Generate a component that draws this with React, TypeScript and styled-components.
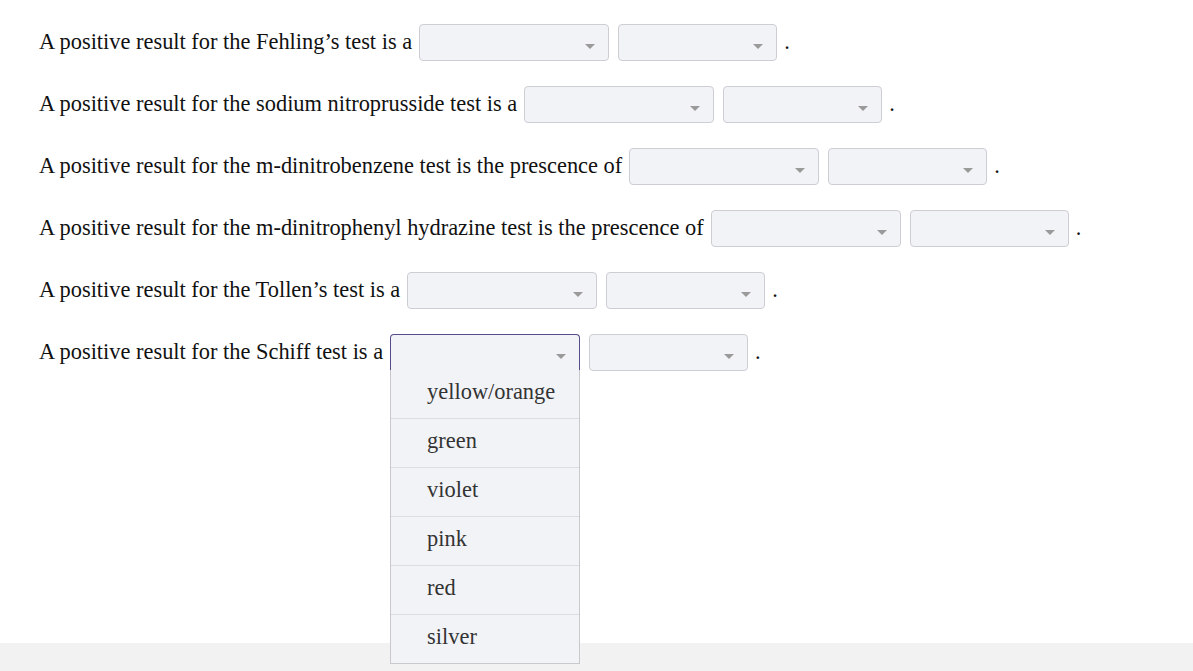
import React from "react";
import styled, { createGlobalStyle } from "styled-components";

const GlobalStyle = createGlobalStyle`
  html, body {
    margin: 0;
    padding: 0;
    background: #ffffff;
  }
  body {
    font-family: "Liberation Serif", "Times New Roman", serif;
    color: #111;
  }
`;

const Page = styled.div`
  min-height: 100vh;
  display: flex;
  flex-direction: column;
`;

const Main = styled.main`
  flex: 1;
  padding: 11px 0 0 39px;
`;

const Footer = styled.footer`
  height: 28px;
  background: #f2f2f2;
`;

const Row = styled.div`
  display: flex;
  align-items: center;
  height: 62px;
  font-size: 22.4px;
`;

const Prompt = styled.span`
  margin-right: 7px;
  white-space: nowrap;
`;

const SelectBox = styled.div<{ $width: number; $open?: boolean }>`
  position: relative;
  box-sizing: border-box;
  width: ${(p) => p.$width}px;
  height: 37px;
  margin-right: 9px;
  background: #f2f3f7;
  border: 1px solid ${(p) => (p.$open ? "#574b8c" : "#cdced3")};
  border-radius: ${(p) => (p.$open ? "4px 4px 0 0" : "4px")};
  ${(p) => (p.$open ? "border-bottom-color: #f2f3f7;" : "")}
  z-index: ${(p) => (p.$open ? 5 : 1)};
`;

const Caret = styled.span`
  position: absolute;
  right: 13px;
  bottom: 11px;
  width: 0;
  height: 0;
  border-left: 5px solid transparent;
  border-right: 5px solid transparent;
  border-top: 5px solid #9a9a9a;
`;

const Period = styled.span`
  margin-left: -2px;
`;

const Menu = styled.ul`
  position: absolute;
  top: 100%;
  left: -1px;
  right: -1px;
  margin: 0;
  padding: 0;
  list-style: none;
  background: #f2f3f7;
  border: 1px solid #c9c9cd;
  border-top: none;
  box-sizing: border-box;
`;

const Option = styled.li`
  height: 49px;
  display: flex;
  align-items: center;
  padding: 0 0 4px 36px;
  font-size: 22.4px;
  color: #333;
  border-top: 1px solid #dcdde2;
  box-sizing: border-box;
  &:first-child {
    border-top: none;
    height: 48px;
  }
`;

type Question = { prompt: string; open?: boolean };

const questions: Question[] = [
  { prompt: "A positive result for the Fehling\u2019s test is a" },
  { prompt: "A positive result for the sodium nitroprusside test is a" },
  { prompt: "A positive result for the m-dinitrobenzene test is the prescence of" },
  { prompt: "A positive result for the m-dinitrophenyl hydrazine test is the prescence of" },
  { prompt: "A positive result for the Tollen\u2019s test is a" },
  { prompt: "A positive result for the Schiff test is a", open: true },
];

const colours = ["yellow/orange", "green", "violet", "pink", "red", "silver"];

export default function App() {
  return (
    <Page>
      <GlobalStyle />
      <Main>
        {questions.map((q) => (
          <Row key={q.prompt}>
            <Prompt>{q.prompt}</Prompt>
            <SelectBox $width={190} $open={q.open}>
              <Caret />
              {q.open && (
                <Menu>
                  {colours.map((c) => (
                    <Option key={c}>{c}</Option>
                  ))}
                </Menu>
              )}
            </SelectBox>
            <SelectBox $width={159}>
              <Caret />
            </SelectBox>
            <Period>.</Period>
          </Row>
        ))}
      </Main>
      <Footer />
    </Page>
  );
}
